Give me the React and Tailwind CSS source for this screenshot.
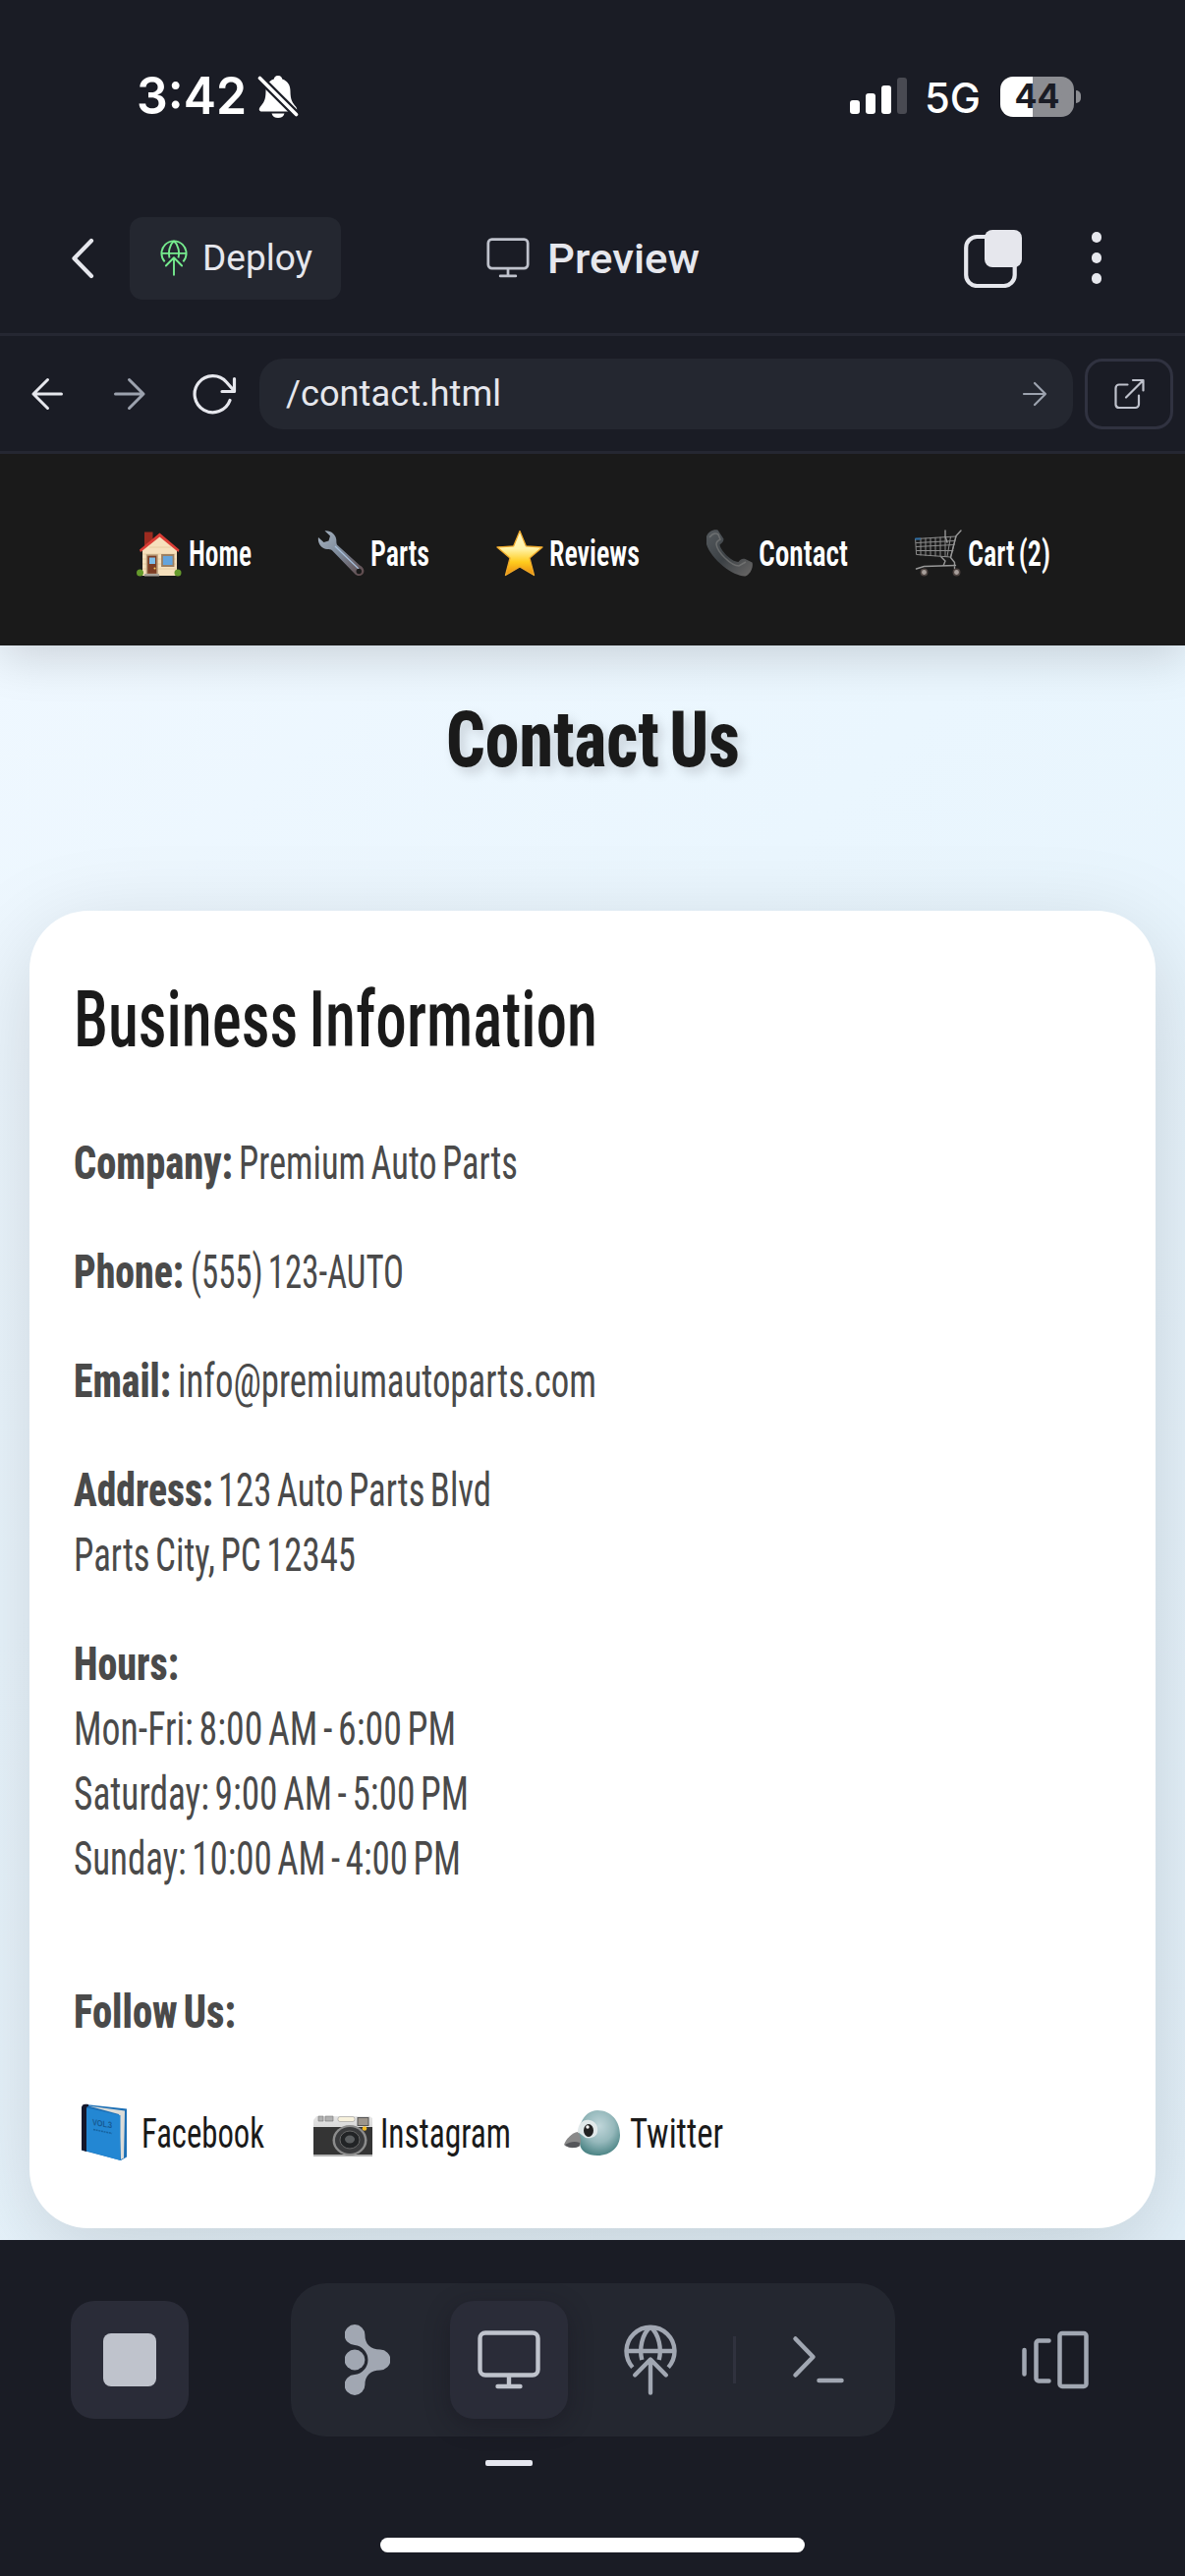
import React, { useLayoutEffect, useRef, useState } from "react";

// Squeezes a run of text horizontally so that it fills the given width.
function Fit({ w, className = "", children }) {
  const ref = useRef(null);
  const [scale, setScale] = useState(1);
  useLayoutEffect(() => {
    setScale(w / ref.current.getBoundingClientRect().width * scale);
  }, [w]);
  return (
    <span className={`inline-block whitespace-nowrap text-left ${className}`} style={{ width: w }}>
      <span ref={ref} className="inline-block origin-left" style={{ transform: `scaleX(${scale})` }}>
        {children}
      </span>
    </span>
  );
}

const line = { fill: "none", strokeLinecap: "round", strokeLinejoin: "round" };

function BellOff() {
  return (
    <svg width="42" height="44" viewBox="0 0 42 44" className="ml-[11px]">
      <path d="M21 1c-3 0-4 2-4.2 3.6C11 6.500 8.500 11 8.500 17c0 9-2.500 12-5.500 15.500-2 2.500-1.500 5 1.500 5h33c3 0 3.500-2.500 1.500-5-3-3.500-5.500-6.500-5.500-15.500 0-6-2.500-10.500-8.300-12.400C25 3 24 1 21 1z" fill="#fff" />
      <path d="M14.500 39.500h13c-.8 3-3.200 4.500-6.500 4.500s-5.700-1.500-6.500-4.500z" fill="#fff" />
      <path d="M1.500 2.500L40 41" stroke="#1a1c25" strokeWidth="8" />
      <path d="M2.500 3.500L39.500 40.500" stroke="#fff" strokeWidth="3.600" strokeLinecap="round" />
    </svg>
  );
}

function Monitor({ width, height, color, sw }) {
  return (
    <svg width={width} height={height} viewBox="0 0 64 60" stroke={color} strokeWidth={sw} {...line}>
      <rect x="2.500" y="2.500" width="59" height="43" rx="5.500" />
      <path d="M32 46v11M20.500 57h23" />
    </svg>
  );
}

function GlobeUp({ width, height, color, sw }) {
  return (
    <svg width={width} height={height} viewBox="0 0 54 72" stroke={color} strokeWidth={sw} {...line}>
      <path d="M8.800 43.600A24.500 24.500 0 1 1 45.200 43.600" strokeLinecap="butt" />
      <path d="M2.500 27h49M27 2.500C18 10 15.500 25 18.300 36M27 2.500C36 10 38.500 25 35.700 36" strokeLinecap="butt" />
      <path d="M27 36v33.500M11.200 51.500L27 35.500l15.800 16" />
    </svg>
  );
}

function House() {
  return (
    <svg width="48" height="48" viewBox="0 0 48 48">
      <path d="M9 2.500h8.500v8L9 18z" fill="#9c2b20" />
      <path d="M7 20L24.500 5.500 42 20v27H7z" fill="#f6e0bc" />
      <path d="M7 25h34M7 30h34M7 35h34M7 40h34M14 18h22" stroke="#e5c99d" strokeWidth=".8" />
      <path d="M4 20.500L24.500 3.500l20 17-1 2.500L24.500 7.500 5 23z" fill="#dc3d35" />
      <path d="M11.500 26h10.500v19.500H11.500z" fill="#7c3d24" stroke="#b69a77" strokeWidth="1.500" />
      <path d="M14 28.500h6v6.500h-6z" fill="#7dbde8" />
      <circle cx="19.500" cy="39.500" r="1" fill="#f4c95a" />
      <path d="M27 26h11.500v11H27z" fill="#64a4dc" stroke="#9c8062" strokeWidth="1.800" />
      <path d="M9 45h15v2.500H9z" fill="#aaa39a" />
      <circle cx="4.500" cy="44" r="3.500" fill="#659a2c" />
      <circle cx="43" cy="44" r="3.500" fill="#659a2c" />
    </svg>
  );
}

function Wrench() {
  return (
    <svg width="48" height="48" viewBox="0 0 48 48">
      <defs>
        <linearGradient id="wr" x1="0" y1="0" x2="1" y2="1">
          <stop offset="0" stopColor="#a7b4c2" />
          <stop offset=".5" stopColor="#7b8797" />
          <stop offset="1" stopColor="#5e4748" />
        </linearGradient>
      </defs>
      <path d="M1 8c-1 6 3 12 9 12 2 0 3.500 0 5 1.200L38 45c4 4.500 10.500 1 9.200-4-.6-2.200-2.200-3.500-4-4.500L20 15.500c-.7-1.500-.6-3-.7-5C19 5 13.500.5 7.500 1.200L13 6.500l-1.500 5-5 1.500z" fill="url(#wr)" />
      <path d="M18 17l24 23" stroke="#a9c0dc" strokeWidth="1.200" />
      <circle cx="42.300" cy="42.500" r="2.700" fill="#1a1a1a" />
    </svg>
  );
}

function Star() {
  return (
    <svg width="48" height="48" viewBox="0 0 48 48">
      <defs>
        <linearGradient id="st" x1="0" y1="0" x2="0" y2="1">
          <stop offset="0" stopColor="#fff9c9" />
          <stop offset=".4" stopColor="#fff3a8" />
          <stop offset=".7" stopColor="#ffcc1d" />
          <stop offset="1" stopColor="#e98a10" />
        </linearGradient>
      </defs>
      <path d="M24 1.500l6.300 15.300L47 18 34 29l4.500 17.500L24 38 9.500 46.500 14 29 1 18l16.700-1.200z" fill="url(#st)" stroke="#efa92b" strokeWidth="1.300" strokeLinejoin="round" />
    </svg>
  );
}

function Handset() {
  return (
    <svg width="48" height="48" viewBox="0 0 48 48">
      <defs>
        <linearGradient id="ph" x1="0" y1="0" x2="1" y2="1">
          <stop offset="0" stopColor="#555a5e" />
          <stop offset=".5" stopColor="#3c4145" />
          <stop offset="1" stopColor="#6a6867" />
        </linearGradient>
      </defs>
      <path d="M1 7C3 2 8-.5 12.500.5l6 9c0 3-2 4.500-4 6 .500 5 11 17 19 17.500 1.500-2.500 4-4 7-3l7 3.500c1.500 4-1.500 12-7 14C29 48 6 31 1 15z" fill="url(#ph)" />
      <path d="M4 8c3-4 6-5 9-3l2 5c-2 1-4 3-4 5 1 8 15 22 23 22l7-4" fill="none" stroke="#8a8a88" strokeWidth="1.600" opacity=".5" />
    </svg>
  );
}

function Cart() {
  return (
    <svg width="48" height="48" viewBox="0 0 48 48" {...line}>
      <path d="M1 9.500l41-2.500-5.500 21L2 25.500zM1.500 13.500l39-2M1.500 17.500l38.500-2M2 21.500l37 0M6 9v17M11 8.800v17.500M16 8.500v18M21 8.300v18.500M26 8v19M31 7.500v20M36.500 7.300L33 27.500" stroke="#8c8c8c" strokeWidth="1" />
      <path d="M47 1l-5 5.500-5.500 22 4 5v6M27 28l4 4-2 5M1.500 40l8-2.500 32-1M31 1v6l2 6" stroke="#989898" strokeWidth="1.400" />
      <circle cx="9.500" cy="43.500" r="3.200" fill="#a89f9b" stroke="#4e4441" strokeWidth="1.500" />
      <circle cx="42.500" cy="43.500" r="3.200" fill="#a89f9b" stroke="#4e4441" strokeWidth="1.500" />
      <path d="M1 9.500h4" stroke="#2d6ea5" strokeWidth="2" />
    </svg>
  );
}

function Book() {
  return (
    <svg width="48" height="58" viewBox="0 0 48 58">
      <path d="M5 1l42 4.500v49L41 58 1 47.500V4z" fill="#1c6fb5" />
      <path d="M8 2.500l37 5-1 48-3 1.500L39 11z" fill="#dcdcd8" />
      <path d="M6 4.500L40.500 12v46L5 48z" fill="#2387d3" />
      <path d="M1 4c.5-3 2.500-4 7-3v2C6 3 6 4 6 7v42L1 47.500z" fill="#15172b" />
      <g className="font-['Liberation_Sans'] font-bold" fill="#165a94" transform="translate(12 22) skewY(9)">
        <text fontSize="9" textLength="20" lengthAdjust="spacingAndGlyphs">VOL. 3</text>
      </g>
      <path d="M13 26.500l19 4" stroke="#17639f" strokeWidth="1.500" strokeDasharray="2 .7" />
    </svg>
  );
}

function Camera() {
  return (
    <svg width="60" height="42" viewBox="0 0 60 42">
      <defs>
        <linearGradient id="cm" x1="0" y1="0" x2="0" y2="1">
          <stop offset="0" stopColor="#e6e6e6" />
          <stop offset="1" stopColor="#b3b3b3" />
        </linearGradient>
      </defs>
      <path d="M3 1h54l3 2v39H0V5z" fill="url(#cm)" />
      <path d="M5 1h5v5H5zM12 1h8v5h-8z" fill="#b1b1b1" stroke="#777" strokeWidth=".6" />
      <rect x="25" y="1.500" width="17" height="5" rx="2" fill="#f7f1dc" stroke="#999" strokeWidth=".6" />
      <path d="M0 12h60v28H0z" fill="#343434" />
      <rect x="45" y="2.500" width="11" height="8" fill="#9c958c" stroke="#555" />
      <circle cx="52" cy="13.500" r="2.300" fill="#f4bb24" />
      <ellipse cx="37" cy="25.500" rx="17.500" ry="15.500" fill="#8c8c8c" />
      <ellipse cx="37" cy="25.500" rx="15" ry="13.500" fill="#3a3b3d" />
      <ellipse cx="37" cy="25" rx="10" ry="9" fill="#222426" stroke="#666" />
      <ellipse cx="37" cy="24.500" rx="5" ry="4" fill="#5b5e60" />
    </svg>
  );
}

function Bird() {
  return (
    <svg width="58" height="46" viewBox="0 0 58 46">
      <defs>
        <radialGradient id="bd" cx=".5" cy=".35" r=".65">
          <stop offset="0" stopColor="#c0d6da" />
          <stop offset=".55" stopColor="#96b9bc" />
          <stop offset="1" stopColor="#4d8586" />
        </radialGradient>
      </defs>
      <path d="M34 0c14 0 23 11 23 25 0 12-9 21-23 21-10 0-17-4-18-12C12 20 19 0 34 0z" fill="url(#bd)" />
      <path d="M14 22c3 3 4 9 2 14-5 3-12 3-16-1 2-6 8-12 14-13z" fill="#8a8a8a" />
      <path d="M1 35c5-3 10-4 15-2l-.5 3.500C11 39 4 38.500 1 35z" fill="#55565a" />
      <path d="M14 22c0-8 5-13 12-12 6 1 9 6 8 12-1 5-6 7-12 6z" fill="#e1e9ea" />
      <ellipse cx="25" cy="20.500" rx="5" ry="6.500" fill="#222" />
      <circle cx="24" cy="17" r="1.700" fill="#fff" />
    </svg>
  );
}

const NAV = [
  ["Home", House, 64],
  ["Parts", Wrench, 60],
  ["Reviews", Star, 92],
  ["Contact", Handset, 91],
  ["Cart (2)", Cart, 84],
];

function Row({ label, w, value, vw, gap = "", children }) {
  return (
    <div className="mb-[45px] leading-[66px]">
      <div className="flex h-[66px]">
        <Fit w={w} className="font-extrabold">{label}</Fit>
        {value && <Fit w={vw} className={gap}>{value}</Fit>}
      </div>
      {children}
    </div>
  );
}

export default function App() {
  return (
    <div className="flex h-[2622px] w-[1206px] flex-col overflow-hidden bg-[#1a1c25] font-['Roboto',sans-serif] text-[#e6e7ed]">
      {/* status bar */}
      <div className="flex h-[186px] shrink-0 items-start pt-[74px] text-white">
        <div className="flex h-[48px] w-full items-center pr-[106px] pl-[139px]">
          <Fit w={112} className="font-['Inter'] text-[52px] leading-[48px] font-semibold">3:42</Fit>
          <BellOff />
          <div className="mt-[-1px] ml-auto flex h-[37px] items-end gap-[6px]">
            <span className="h-[14px] w-[10px] rounded-[3px] bg-white" />
            <span className="h-[21px] w-[10px] rounded-[3px] bg-white" />
            <span className="h-[29px] w-[10px] rounded-[3px] bg-white" />
            <span className="h-[37px] w-[10px] rounded-[3px] bg-[#494a52]" />
          </div>
          <Fit w={57} className="mt-[3px] ml-[18px] font-['Inter'] text-[42px] leading-[50px] font-medium">5G</Fit>
          <div className="ml-[20px] flex h-[41px] w-[75px] items-center justify-center rounded-[13px] bg-linear-to-r from-white from-[44%] to-[#8c8d92] to-[44%] font-['Inter'] text-[34px] leading-none font-bold text-[#1a1c25]">
            <Fit w={46}>44</Fit>
          </div>
          <span className="ml-[2px] h-[13px] w-[5px] rounded-r-full bg-[#8c8d92]" />
        </div>
      </div>

      {/* title bar */}
      <div className="flex h-[156px] shrink-0 items-center border-b-[3px] border-[#252732] pr-[85px] pl-[72px]">
        <svg width="24" height="42" viewBox="0 0 24 42" stroke="#e6e7ed" strokeWidth="4.200" {...line}>
          <path d="M21 3L3.500 21 21 39" />
        </svg>
        <div className="ml-[36px] flex h-[84px] w-[215px] items-center rounded-[13px] bg-[#242730] pl-[31px]">
          <GlobeUp width="28" height="37" color="#76ec8e" sw="3.700" />
          <Fit w={112} className="mt-[1px] ml-[15px] text-[36.500px] leading-[44px]">Deploy</Fit>
        </div>
        <div className="ml-[148px] flex items-center">
          <Monitor width="44" height="41" color="#bfc2cc" sw="4" />
        </div>
        <Fit w={155} className="mt-[2px] ml-[18px] text-[42px] leading-[50px] font-medium">Preview</Fit>
        <svg width="60" height="60" viewBox="0 0 60 60" className="ml-auto">
          <rect x="2.200" y="8" width="49.500" height="50" rx="11" fill="none" stroke="#e6e7ed" strokeWidth="4.200" />
          <rect x="21" y="1" width="38" height="38" rx="8" fill="#e6e7ed" />
        </svg>
        <div className="ml-[70px] flex flex-col gap-[10.500px]">
          <span className="size-[10.500px] rounded-full bg-[#e6e7ed]" />
          <span className="size-[10.500px] rounded-full bg-[#e6e7ed]" />
          <span className="size-[10.500px] rounded-full bg-[#e6e7ed]" />
        </div>
      </div>

      {/* address bar */}
      <div className="flex h-[120px] shrink-0 items-center border-b-[3px] border-[#252732] pr-[12px] pl-[31px]">
        <svg width="34" height="34" viewBox="0 0 34 34" stroke="#e6e7ed" strokeWidth="3" {...line}>
          <path d="M31.500 17H3M17.500 2.500L3 17l14.500 14.500" />
        </svg>
        <svg width="34" height="34" viewBox="0 0 34 34" className="ml-[50px]" stroke="#9ca2ae" strokeWidth="3" {...line}>
          <path d="M2.500 17H31M16.500 2.500L31 17 16.500 31.500" />
        </svg>
        <svg width="46" height="42" viewBox="0 0 46 42" className="ml-[46px]" stroke="#e6e7ed" strokeWidth="3.200" {...line}>
          <path d="M39 27.500A18.500 18.500 0 1 1 35.500 9L43 17.500M43.500 5.500v13H31" />
        </svg>
        <div className="ml-[23px] flex h-[72px] w-[828px] items-center rounded-[24px] bg-[#242730] pr-[26px] pl-[27px]">
          <Fit w={219} className="mt-[1px] text-[36.500px] leading-[44px]">/contact.html</Fit>
          <svg width="26" height="26" viewBox="0 0 26 26" className="ml-auto" stroke="#9ca2ae" strokeWidth="2.200" {...line}>
            <path d="M2 13h22M13 2l11 11-11 11" />
          </svg>
        </div>
        <div className="ml-[12px] flex h-[72px] w-[90px] items-center justify-center rounded-[18px] border-[3px] border-[#303240]">
          <svg width="32" height="32" viewBox="0 0 32 32" stroke="#bfc2cc" strokeWidth="2.200" {...line}>
            <path d="M14.500 6.500H6a3.500 3.500 0 0 0-3.500 3.500v17A3.500 3.500 0 0 0 6 30h16.500a3.500 3.500 0 0 0 3.500-3.500v-9M13 19.500L30 2.500M20 2h10.500v10.500" />
          </svg>
        </div>
      </div>

      {/* previewed page */}
      <div className="flex h-[1818px] shrink-0 flex-col overflow-hidden bg-linear-135 from-[#f0f8ff] via-[#eaf6fe] via-40% to-[#e3f1fa]">
        <nav className="z-10 flex h-[195px] shrink-0 items-start justify-center gap-[67.500px] bg-[#1a1a1a] pt-[76px] text-white shadow-[0_12px_45px_rgba(0,0,0,0.15)]">
          {NAV.map(([name, Icon, w]) => (
            <div key={name} className="flex h-[52px] items-center">
              <span className="-mt-[2px]"><Icon /></span>
              <Fit w={w} className="ml-[6px] text-[36px] leading-[52px] font-semibold [font-stretch:75%] [word-spacing:-0.08em]">{name}</Fit>
            </div>
          ))}
        </nav>
        <h1 className="mt-[48px] flex justify-center text-[80px] leading-[96px] font-extrabold text-[#1a1a1a] [font-stretch:75%] [text-shadow:6px_6px_12px_rgba(0,0,0,0.15)] [word-spacing:-0.08em]">
          <Fit w={299}>Contact Us</Fit>
        </h1>
        <section className="mx-[30px] mt-[126px] h-[1341px] shrink-0 rounded-[60px] bg-white px-[45px] pt-[63px] text-[48px] text-[#4a4a4a] shadow-[0_24px_96px_rgba(0,0,0,0.15)] [font-stretch:75%] [word-spacing:-0.08em]">
          <h2 className="mb-[65px] h-[96px] text-[79px] leading-[96px] font-medium text-[#1a1a1a]">
            <Fit w={533}>Business Information</Fit>
          </h2>
          <Row label="Company:" w={162} value="Premium Auto Parts" vw={284} gap="ml-[6px]" />
          <Row label="Phone:" w={112} value="(555) 123-AUTO" vw={217} gap="ml-[7px]" />
          <Row label="Email:" w={99} value="info@premiumautoparts.com" vw={426} gap="ml-[7px]" />
          <Row label="Address:" w={142} value="123 Auto Parts Blvd" vw={278} gap="ml-[5px]">
            <div className="h-[66px]"><Fit w={287}>Parts City, PC 12345</Fit></div>
          </Row>
          <Row label="Hours:" w={107}>
            <div className="h-[66px]"><Fit w={389}>Mon-Fri: 8:00 AM - 6:00 PM</Fit></div>
            <div className="h-[66px]"><Fit w={402}>Saturday: 9:00 AM - 5:00 PM</Fit></div>
            <div className="h-[66px]"><Fit w={394}>Sunday: 10:00 AM - 4:00 PM</Fit></div>
          </Row>
          <div className="mt-[90px]">
            <Row label="Follow Us:" w={165} />
          </div>
          <div className="mt-[57px] flex h-[66px] items-center pl-[7px] text-[43px] leading-[66px] text-[#1a1a1a]">
            <span className="-mt-[3px]"><Book /></span>
            <Fit w={125} className="ml-[14px]">Facebook</Fit>
            <span className="ml-[50px] pt-[6px]"><Camera /></span>
            <Fit w={133} className="ml-[8px]">Instagram</Fit>
            <span className="ml-[54px]"><Bird /></span>
            <Fit w={95} className="ml-[9px]">Twitter</Fit>
          </div>
        </section>
      </div>

      {/* bottom dock */}
      <div className="z-10 flex h-[342px] shrink-0 flex-col bg-[#1a1c25] pt-[44px]">
        <div className="flex h-[156px] items-center pl-[72px]">
          <div className="flex size-[120px] items-center justify-center rounded-[24px] bg-[#2a2c38]">
            <span className="size-[54px] rounded-[8px] bg-[#bfc3cc]" />
          </div>
          <div className="ml-[104px] flex h-[156px] w-[615px] items-center gap-[24px] rounded-[36px] bg-[#242730] px-[18px]">
            <div className="flex size-[120px] items-center justify-center">
              <svg width="46" height="72" viewBox="0 0 46 72" fill="#a1a7b2">
                <circle cx="10" cy="36" r="10.400" />
                <path d="M20.400 10.500C20.400 20 26 25.600 36 25.600A10.400 10.400 0 0 1 36 46.400C26 46.400 20.400 52 20.400 61.500A10.400 10.400 0 1 1 10 51.100A15.200 15.200 0 0 0 10 20.900A10.400 10.400 0 1 1 20.400 10.500Z" />
              </svg>
            </div>
            <div className="flex size-[120px] items-center justify-center rounded-[24px] bg-[#2a2c38] shadow-[0_6px_24px_rgba(20,18,28,0.4)]">
              <Monitor width="64" height="60" color="#bfc3cc" sw="4.400" />
            </div>
            <div className="flex size-[120px] items-center justify-center">
              <GlobeUp width="54" height="72" color="#a1a7b2" sw="4.400" />
            </div>
            <span className="h-[48px] w-[3px] bg-[#30323e]" />
            <div className="flex size-[120px] items-center justify-center">
              <svg width="54" height="50" viewBox="0 0 54 50" stroke="#a1a7b2" strokeWidth="4.500" {...line}>
                <path d="M3.500 3.500L21.500 22 3.500 40.500M27.500 46h23" />
              </svg>
            </div>
          </div>
          <svg width="70" height="60" viewBox="0 0 70 60" className="ml-[128px]" stroke="#a1a7b2" strokeWidth="4.500" {...line}>
            <rect x="39.500" y="3" width="27" height="54" rx="2.500" />
            <path d="M28.500 10.500H18a2.500 2.500 0 0 0-2.500 2.500v36a2.500 2.500 0 0 0 2.500 2.500h10.500M3.500 20v24.500" />
          </svg>
        </div>
        <span className="mt-[24px] ml-[494px] h-[6px] w-[48px] rounded-[2px] bg-[#e6e7f0]" />
        <span className="mx-auto mt-[73px] h-[15px] w-[432px] rounded-full bg-white" />
      </div>
    </div>
  );
}
